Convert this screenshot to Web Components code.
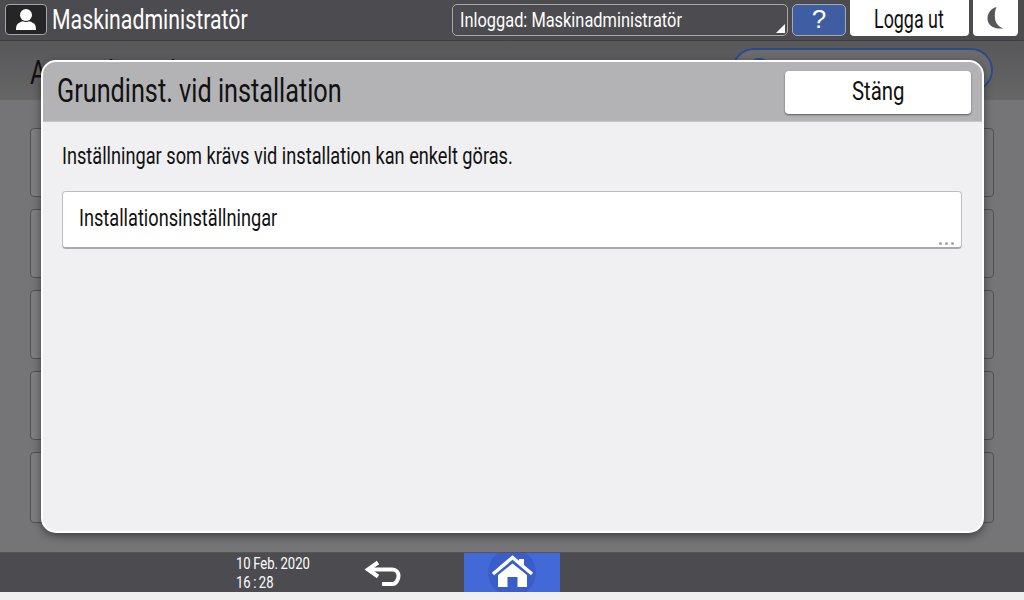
<!DOCTYPE html>
<html lang="sv"><head><meta charset="utf-8"><title>Grundinst.</title>
<style>
html,body{margin:0;padding:0;background:#efefef}
body{width:1024px;height:600px;overflow:hidden;font-family:"Roboto",sans-serif}
</style></head><body>
<panel-screen>
<top-bar slot="top"></top-bar>
<sub-bar slot="sub"></sub-bar>
<bg-rows slot="rows"></bg-rows>
<bottom-bar slot="bottom"></bottom-bar>
<modal-dialog slot="modal" heading="Grundinst. vid installation">
 <p-text>Inställningar som krävs vid installation kan enkelt göras.</p-text>
 <menu-item>Installationsinställningar</menu-item>
</modal-dialog>
</panel-screen>
<script>
const FONT='"Roboto",sans-serif';
function def(name,html){customElements.define(name,class extends HTMLElement{constructor(){super();this.attachShadow({mode:'open'}).innerHTML=html;}
connectedCallback(){const h=this.shadowRoot.querySelector('[data-heading]');if(h)h.textContent=this.getAttribute('heading')}});}
const narrow=`.n{display:inline-block;transform:scaleX(var(--sx,.8));transform-origin:0 50%;white-space:nowrap;font-family:${FONT}}`;
def('panel-screen',`<style>:host{display:flex;flex-direction:column;position:relative;width:1024px;height:600px;background:#efefef}
.main{flex:none;height:452px;background:#757476;display:flex}
</style><slot name="top"></slot><slot name="sub"></slot><div class="main"><slot name="rows"></slot></div><slot name="bottom"></slot><slot name="modal"></slot>`);
def('top-bar',`<style>:host{display:flex;align-items:flex-start;box-sizing:border-box;height:41px;background:#4c4b50;border-bottom:1px solid #3f3f42;padding:4px 0 0 5px;color:#fff}
${narrow}
.user{box-sizing:border-box;width:42px;height:31px;background:#252527;border:1px solid #a6a6a8;border-radius:4px;display:flex;align-items:center;justify-content:center}
.name{font-size:28px;margin-left:5px;width:400px;line-height:32px;--sx:.76}
.sel{box-sizing:border-box;width:336px;height:32px;border:1px solid #a9a9ab;border-radius:5px;position:relative;font-size:21px;line-height:30px;padding-left:7px;--sx:.78}
.sel svg{position:absolute;right:2px;bottom:2px}
.q{box-sizing:border-box;width:54px;height:32px;margin-left:4px;background:#3e5da3;border:1px solid #a9a9ab;border-radius:5px;text-align:center;font:26px/29px "Liberation Sans",sans-serif}
.out{width:119px;height:36px;margin:-4px 0 0 4px;background:#fff;border-radius:0 0 4px 4px;color:#111;font-size:25px;line-height:39px;padding-left:24px;box-sizing:border-box;--sx:.715}
.moon{width:45px;height:36px;margin:-4px 0 0 4px;background:#fff;border-radius:0 0 4px 4px;display:flex;align-items:center;justify-content:center}
</style>
<div class="user"><svg width="26" height="24" viewBox="0 0 26 24"><circle cx="13" cy="7" r="6" fill="#fff"/><path d="M3 22c0-1 0-5 2-6.500 2-1.200 3.500-1.800 5-2.200 1.800 1 4.200 1 6 0 1.500.4 3 1 5 2.200 2 1.500 2 5.500 2 6.500z" fill="#fff"/></svg></div>
<div class="name"><span class="n">Maskinadministratör</span></div>
<div class="sel"><span class="n">Inloggad: Maskinadministratör</span><svg width="9" height="9"><path d="M9 0V9H0z" fill="#fff"/></svg></div>
<div class="q">?</div>
<div class="out"><span class="n">Logga ut</span></div>
<div class="moon"><svg width="20" height="24" viewBox="0 0 20 24"><path d="M10.500 1C4.500 3 1.500 7 1.500 12.500S6 23.500 17.500 22.500C13 21 9.500 17.500 9 12.500 8.500 8 9 4 10.500 1z" fill="#57575b"/></svg></div>`);
def('sub-bar',`<style>:host{display:flex;box-sizing:border-box;height:59px;background:linear-gradient(#58585a,#666667);position:relative;padding:7px 31px 0 30px;justify-content:space-between;color:#111;overflow:hidden}
.t{font-size:33px;line-height:40px;padding-top:5px;--sx:.76}${narrow}
.pill{box-sizing:border-box;width:261px;height:44px;border:2px solid #2a4a8f;border-radius:22px;background:#6b6b6d;position:relative}
.pill i{position:absolute;left:13px;top:8px;width:24px;height:24px;border-radius:50%;background:#2a4a8f}
</style><div class="t"><span class="n">Användarverktyg</span></div><div class="pill"><i></i></div>`);
def('bg-rows',`<style>:host{display:flex;flex-direction:column;gap:12px;box-sizing:border-box;width:1024px;padding:28px 30px 0;overflow:hidden;height:452px}
div{box-sizing:border-box;flex:none;height:69px;border:1px solid #515153;border-radius:4px;background:linear-gradient(90deg,#7e7e80,#767678)}
div:first-child{border:2px solid #434345}
div:last-child{height:71px}
</style><div></div><div></div><div></div><div></div><div></div>`);
def('bottom-bar',`<style>:host{display:flex;align-items:stretch;box-sizing:border-box;height:40px;background:#4c4b50;color:#fff;flex:none;border-top:1px solid #555558}
.d{margin-left:236px;width:118px;font-size:17px;line-height:19px;padding-top:1px;--sx:.77;word-spacing:-1px}
${narrow}
.b{width:110px;display:flex;align-items:flex-start}
.h{width:96px;background:#4369d8;display:flex;align-items:flex-start;justify-content:center;overflow:hidden}
</style><div class="d"><span class="n">10 Feb. 2020</span><br><span class="n">16 : 28</span></div>
<div class="b"><svg width="40" height="34" viewBox="0 0 40 34" style="margin:3px 0 0 9px"><path d="M15 6.500 5 13.500l10 7" fill="none" stroke="#fff" stroke-width="4"/><path d="M5 13.500H29.500c3.500 0 6 3 6 6.500S33 28 29.500 28H19" fill="none" stroke="#fff" stroke-width="4"/></svg></div>
<div class="h"><svg width="56" height="39" viewBox="0 0 56 39"><circle cx="28" cy="19.500" r="24" fill="#3a5dc8"/><path d="M9 21 28.500 4.500 48 21" fill="none" stroke="#fff" stroke-width="3.500"/><path d="M35 6h5v9.500L35 11z" fill="#fff"/><path fill-rule="evenodd" d="M14 22 28.500 10.500 43 22V34H14zM23.500 24h10V34h-10z" fill="#fff"/><path d="M25.500 26h6v8h-6z" fill="#3a5dc8"/></svg></div>`);
def('modal-dialog',`<style>:host{position:absolute;left:41px;top:60px;box-sizing:border-box;width:943px;height:473px;background:#f0eff2;border:2px solid #fff;border-radius:15px;box-shadow:0 3px 8px rgba(0,0,0,.45);display:flex;flex-direction:column;overflow:hidden;color:#111}
header{flex:none;height:60px;background:#b3b3b5;display:flex;align-items:center;justify-content:space-between;padding:0 11px 0 14px;border-bottom:1px solid #c8c8ca;box-sizing:border-box}
h1{margin:0;font-weight:400;font-size:34px;line-height:40px;margin-top:-3px;--sx:.742}${narrow}
button{width:186px;height:43px;margin-top:1px;background:#fff;border:0;border-radius:4px;box-shadow:0 1px 2px rgba(0,0,0,.5);font-size:25px;line-height:41px;color:#111;padding:0 0 2px 67px;text-align:left;--sx:.815}
.c{padding:22px 20px 0 19px;display:flex;flex-direction:column}
</style><header><h1><span class="n" data-heading></span></h1><button><span class="n">Stäng</span></button></header><div class="c"><slot></slot></div>`);
def('p-text',`<style>:host{display:block;font-size:23px;line-height:26px;margin-bottom:21px;--sx:.79}${narrow}</style><span class="n"><slot></slot></span>`);
def('menu-item',`<style>:host{display:block;box-sizing:border-box;width:900px;height:58px;background:#fff;border:1px solid #bdbdbf;border-bottom:2px solid #a9a9ab;border-radius:4px;font-size:23px;line-height:54px;padding-left:16px;position:relative;--sx:.79}${narrow}
i{position:absolute;right:7px;bottom:2px;display:flex;gap:3px}i b{width:3px;height:3px;border-radius:50%;background:#a5a5a7}
</style><span class="n"><slot></slot></span><i><b></b><b></b><b></b></i>`);
</script>
</body></html>
